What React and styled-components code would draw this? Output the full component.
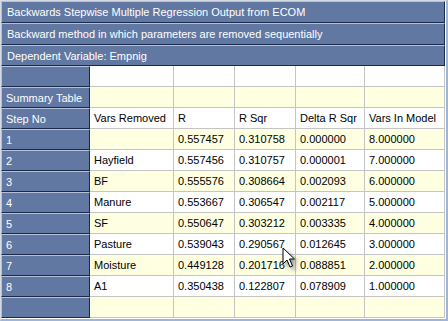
import styled, { createGlobalStyle } from "styled-components";

const Global = createGlobalStyle`
  body {
    margin: 0;
    background: #ffffff;
    font-family: "Liberation Sans", Arial, sans-serif;
    font-size: 11px;
  }
`;

const Frame = styled.div`
  position: relative;
  width: 448px;
  height: 321px;
  box-sizing: border-box;
  border-left: 1px solid #d6dae2;
  border-top: 1px solid #d6dae2;
  border-right: 2px solid #9fb6d8;
  border-bottom: 2px solid #9fb6d8;
  background: #ffffff;
  overflow: hidden;
`;

const Grid = styled.div`
  width: 444px;
  display: flex;
  flex-direction: column;
`;

const Banner = styled.div`
  height: ${(p) => p.$h}px;
  box-sizing: border-box;
  display: flex;
  align-items: center;
  padding-left: 5px;
  color: #ffffff;
  background: #6078a2;
  border-top: 1px solid #b4c1d8;
  border-left: 1px solid #b4c1d8;
  border-right: 1px solid #1b2a47;
  border-bottom: 1px solid #1b2a47;
  white-space: nowrap;
`;

const Row = styled.div`
  display: grid;
  grid-template-columns: 89px 84px 61px 61px 69px 80px;
  height: 21px;
  background: ${(p) => (p.$alt ? "#ffffe1" : "#ffffff")};
`;

const HeadCell = styled.div`
  box-sizing: border-box;
  display: flex;
  align-items: center;
  padding-left: 4px;
  color: #ffffff;
  background: #6078a2;
  border-top: 1px solid #b4c1d8;
  border-left: 1px solid #b4c1d8;
  border-right: 1px solid #1b2a47;
  border-bottom: 1px solid #1b2a47;
  white-space: nowrap;
`;

const Cell = styled.div`
  box-sizing: border-box;
  display: flex;
  align-items: center;
  padding-left: 4px;
  color: #000000;
  border-right: 1px solid #c4c4c4;
  border-bottom: 1px solid #c4c4c4;
  white-space: nowrap;
`;

const Pointer = styled.svg`
  position: absolute;
  left: 281px;
  top: 246px;
  filter: drop-shadow(3px 3px 2px rgba(20, 30, 60, 0.45));
`;

const rows = [
  { step: "", cells: ["", "", "", "", ""] },
  { step: "Summary Table", cells: ["", "", "", "", ""] },
  { step: "Step No", cells: ["Vars Removed", "R", "R Sqr", "Delta R Sqr", "Vars In Model"] },
  { step: "1", cells: ["", "0.557457", "0.310758", "0.000000", "8.000000"] },
  { step: "2", cells: ["Hayfield", "0.557456", "0.310757", "0.000001", "7.000000"] },
  { step: "3", cells: ["BF", "0.555576", "0.308664", "0.002093", "6.000000"] },
  { step: "4", cells: ["Manure", "0.553667", "0.306547", "0.002117", "5.000000"] },
  { step: "5", cells: ["SF", "0.550647", "0.303212", "0.003335", "4.000000"] },
  { step: "6", cells: ["Pasture", "0.539043", "0.290567", "0.012645", "3.000000"] },
  { step: "7", cells: ["Moisture", "0.449128", "0.201716", "0.088851", "2.000000"] },
  { step: "8", cells: ["A1", "0.350438", "0.122807", "0.078909", "1.000000"] },
  { step: "", cells: ["", "", "", "", ""] },
];

export default function App() {
  return (
    <>
      <Global />
      <Frame>
        <Grid>
          <Banner $h={22}>Backwards Stepwise Multiple Regression Output from ECOM</Banner>
          <Banner $h={22}>Backward method in which parameters are removed sequentially</Banner>
          <Banner $h={21}>Dependent Variable: Empnig</Banner>
          {rows.map((r, i) => (
            <Row key={i} $alt={i % 2 === 1}>
              <HeadCell>{r.step}</HeadCell>
              {r.cells.map((c, j) => (
                <Cell key={j}>{c}</Cell>
              ))}
            </Row>
          ))}
        </Grid>
        <Pointer width="14" height="22" viewBox="0 0 14 22">
          <path
            d="M1 1 L1 17 L5 13 L8 20 L10.5 19 L7.5 12 L12.5 12 Z"
            fill="#ffffff"
            stroke="#000000"
            strokeWidth="1"
            strokeLinejoin="miter"
          />
        </Pointer>
      </Frame>
    </>
  );
}
